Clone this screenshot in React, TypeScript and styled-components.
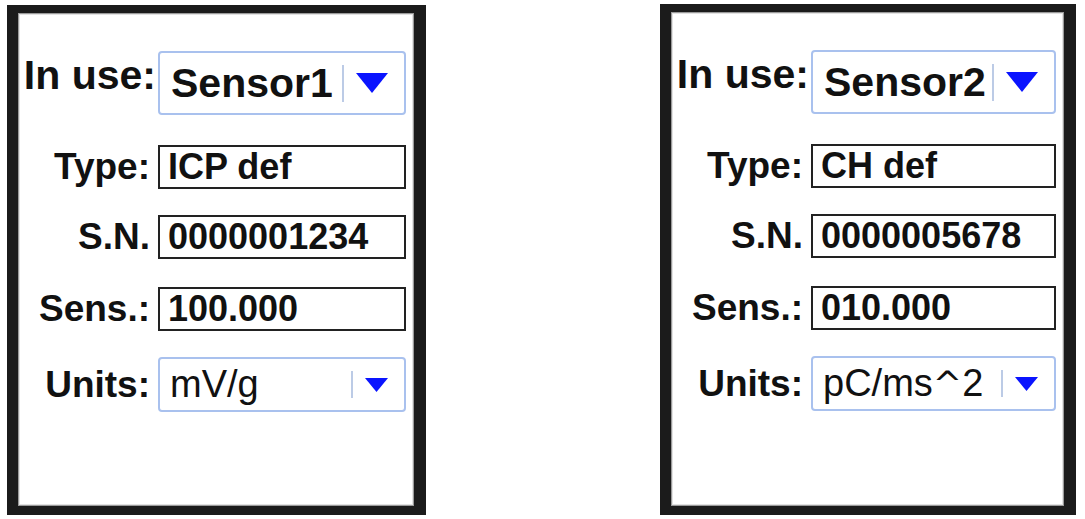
import React from "react";
import styled, { createGlobalStyle } from "styled-components";

const GlobalStyle = createGlobalStyle`
  html, body {
    margin: 0;
    padding: 0;
    background: #ffffff;
  }
  body {
    font-family: "Liberation Sans", Arial, Helvetica, sans-serif;
    color: #111111;
  }
`;

const Stage = styled.main`
  display: flex;
  align-items: flex-end;
  height: 515px;
  padding-left: 7px;
  gap: 234px;
`;

const Panel = styled.section<{ $w: number; $h: number }>`
  box-sizing: border-box;
  width: ${(p) => p.$w}px;
  height: ${(p) => p.$h}px;
  border-style: solid;
  border-color: #1b1b1b;
  border-width: 8px 12px 9px 11px;
  background: #ffffff;
  box-shadow: inset 0 0 0 1px #9a9a9a, inset 0 0 0 2px #e2e2e2;
  padding-top: 38px;
  display: flex;
  flex-direction: column;
`;

const Row = styled.div<{ $after: number }>`
  display: flex;
  align-items: center;
  margin-bottom: ${(p) => p.$after}px;
`;

const Label = styled.span<{ $big?: boolean }>`
  box-sizing: border-box;
  flex: none;
  width: 140px;
  text-align: right;
  white-space: nowrap;
  font-weight: 700;
  font-size: ${(p) => (p.$big ? 41 : 37)}px;
  padding-right: ${(p) => (p.$big ? 2 : 8)}px;
  color: #111111;
  ${(p) => (p.$big ? "align-self: flex-start; margin-top: 1px;" : "")}
`;

const Field = styled.div`
  flex: 1;
  box-sizing: border-box;
  height: 44px;
  margin-right: 8px;
  border: 2px solid #222222;
  padding-left: 8px;
  display: flex;
  align-items: center;
  font-weight: 700;
  font-size: 36px;
  white-space: nowrap;
  overflow: hidden;
`;

const Select = styled.div<{ $h: number; $pad: number }>`
  flex: 1;
  box-sizing: border-box;
  height: ${(p) => p.$h}px;
  margin-right: 8px;
  border: 2px solid #a9c1ee;
  border-radius: 4px;
  padding: 0 16px 0 ${(p) => p.$pad}px;
  display: flex;
  align-items: center;
  background: #ffffff;
`;

const SelectValue = styled.span<{ $big?: boolean }>`
  flex: 1;
  white-space: nowrap;
  overflow: hidden;
  font-size: ${(p) => (p.$big ? 41 : 38)}px;
  font-weight: ${(p) => (p.$big ? 700 : 400)};
  color: #111111;
`;

const Caret = styled.span`
  font-family: "DejaVu Sans", "Liberation Sans", sans-serif;
  font-size: 35px;
`;

const Divider = styled.span<{ $h: number }>`
  flex: none;
  width: 2px;
  height: ${(p) => p.$h}px;
  background: #bccbe6;
  margin-right: 12px;
`;

const ArrowIcon = ({ w, h }: { w: number; h: number }) => (
  <svg width={w} height={h} viewBox={`0 0 ${w} ${h}`} style={{ flex: "none", display: "block" }}>
    <polygon points={`0,0 ${w},0 ${w / 2},${h}`} fill="#0a14ff" />
  </svg>
);

type Sensor = {
  name: string;
  type: string;
  sn: string;
  sens: string;
  units: React.ReactNode;
  w: number;
  h: number;
};

const sensors: Sensor[] = [
  { name: "Sensor1", type: "ICP def", sn: "0000001234", sens: "100.000", units: "mV/g", w: 419, h: 510 },
  {
    name: "Sensor2",
    type: "CH def",
    sn: "0000005678",
    sens: "010.000",
    units: (
      <>
        pC/ms<Caret>^</Caret>2
      </>
    ),
    w: 416,
    h: 511,
  },
];

const SensorPanel = ({ s }: { s: Sensor }) => (
  <Panel $w={s.w} $h={s.h}>
    <Row $after={30}>
      <Label $big>In use:</Label>
      <Select $h={64} $pad={11}>
        <SelectValue $big>{s.name}</SelectValue>
        <Divider $h={37} />
        <ArrowIcon w={32} h={20} />
      </Select>
    </Row>
    <Row $after={26}>
      <Label>Type:</Label>
      <Field>{s.type}</Field>
    </Row>
    <Row $after={28}>
      <Label>S.N.</Label>
      <Field>{s.sn}</Field>
    </Row>
    <Row $after={26}>
      <Label>Sens.:</Label>
      <Field>{s.sens}</Field>
    </Row>
    <Row $after={0}>
      <Label>Units:</Label>
      <Select $h={55} $pad={10}>
        <SelectValue>{s.units}</SelectValue>
        <Divider $h={27} />
        <ArrowIcon w={23} h={14} />
      </Select>
    </Row>
  </Panel>
);

export default function App() {
  return (
    <>
      <GlobalStyle />
      <Stage>
        {sensors.map((s) => (
          <SensorPanel key={s.name} s={s} />
        ))}
      </Stage>
    </>
  );
}
